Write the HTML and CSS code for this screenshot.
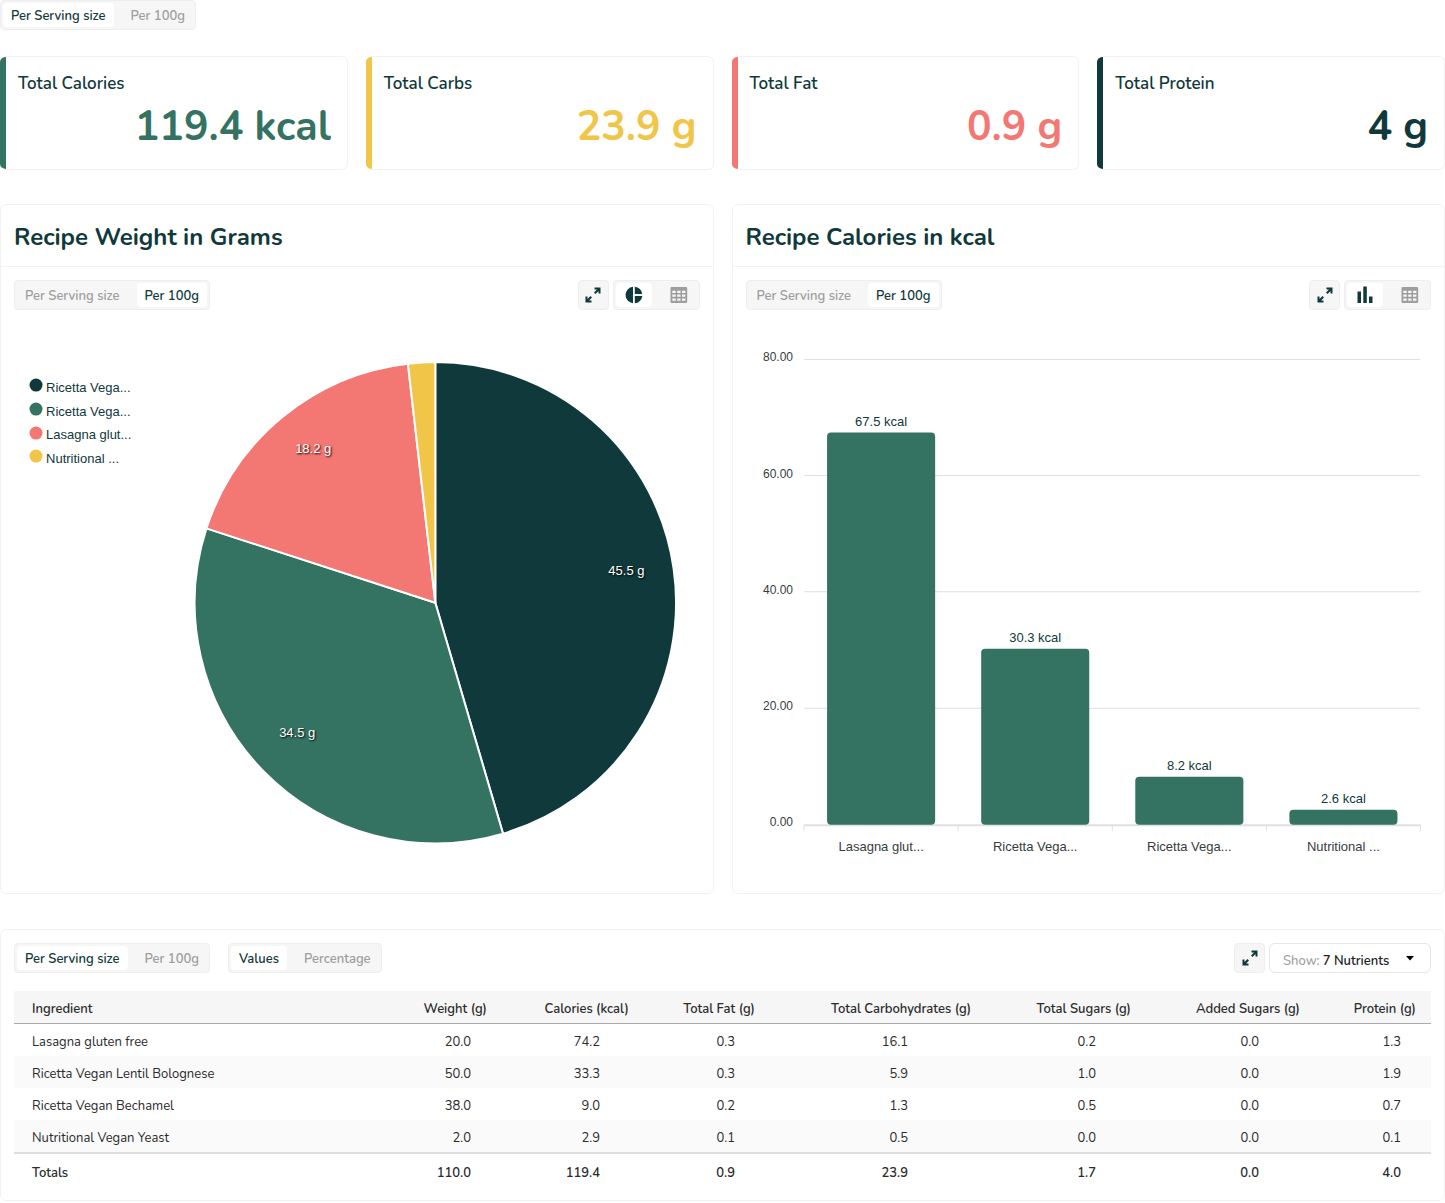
FILE: index.html
```html
<!DOCTYPE html>
<html lang="en">
<head>
<meta charset="utf-8">
<meta name="viewport" content="width=device-width, initial-scale=1">
<title>Recipe Nutrition</title>
<link rel="stylesheet" href="styles.css">
</head>
<body>
<svg class="sprite" aria-hidden="true">
  <symbol id="icon-expand" viewBox="0 0 18 18">
    <path d="M10.500 1.500H16.500V7.500H14.500V5L11.500 8L10 6.500L13 3.500H10.500ZM7.500 16.500H1.500V10.500H3.500V13L6.500 10L8 11.500L5 14.500H7.500Z"/>
  </symbol>
  <symbol id="icon-pie" viewBox="0 0 18 18">
    <path d="M8 .7V17.300A8.350 8.350 0 0 1 8 .7ZM9.800 .7A8.350 8.350 0 0 1 17.300 8.100H9.800ZM9.800 9.900H17.300A8.350 8.350 0 0 1 9.800 17.300Z"/>
  </symbol>
  <symbol id="icon-bars" viewBox="0 0 18 18">
    <path d="M1.500 5.500H5V17H1.500ZM7.300 .5H10.800V17H7.300ZM13 10.500H16.500V17H13Z"/>
  </symbol>
  <symbol id="icon-table" viewBox="0 0 18 18">
    <path fill-rule="evenodd" d="M1.500 1H16Q17.200 1 17.200 2.200V15.800Q17.200 17 16 17H1.500Q.5 17 .5 15.800V2.200Q.5 1 1.500 1ZM2.300 4.800V7H5.700V4.800ZM7.200 4.800V7H10.500V4.800ZM12 4.800V7H15.400V4.800ZM2.300 8.600V10.800H5.700V8.600ZM7.200 8.600V10.800H10.500V8.600ZM12 8.600V10.800H15.400V8.600ZM2.300 12.400V14.800H5.700V12.400ZM7.200 12.400V14.800H10.500V12.400ZM12 12.400V14.800H15.400V12.400Z"/>
  </symbol>
</svg>

<main class="page">
  <div class="toggle page-toggle" role="group" aria-label="Amount basis">
    <button type="button" class="toggle-button is-active" aria-pressed="true">Per Serving size</button>
    <button type="button" class="toggle-button" aria-pressed="false">Per 100g</button>
  </div>

  <section class="cards" aria-label="Totals">
    <article class="card card-calories"><h2 class="card-title">Total Calories</h2><p class="card-value">119.4 kcal</p></article>
    <article class="card card-carbs"><h2 class="card-title">Total Carbs</h2><p class="card-value">23.9 g</p></article>
    <article class="card card-fat"><h2 class="card-title">Total Fat</h2><p class="card-value">0.9 g</p></article>
    <article class="card card-protein"><h2 class="card-title">Total Protein</h2><p class="card-value">4 g</p></article>
  </section>

  <div class="charts">
    <section class="panel">
      <h2 class="panel-title">Recipe Weight in Grams</h2>
      <div class="toolbar">
        <div class="toggle" role="group" aria-label="Weight basis">
          <button type="button" class="toggle-button" aria-pressed="false">Per Serving size</button>
          <button type="button" class="toggle-button is-active" aria-pressed="true">Per 100g</button>
        </div>
        <div class="tools">
          <button type="button" class="icon-button" aria-label="Expand"><svg class="icon"><use href="#icon-expand"/></svg></button>
          <div class="toggle" role="group" aria-label="Weight view">
            <button type="button" class="toggle-button toggle-icon is-active" aria-label="Pie chart" aria-pressed="true"><svg class="icon"><use href="#icon-pie"/></svg></button>
            <button type="button" class="toggle-button toggle-icon" aria-label="Table" aria-pressed="false"><svg class="icon"><use href="#icon-table"/></svg></button>
          </div>
        </div>
      </div>
      <svg class="chart" viewBox="0 0 711 583" role="img" aria-label="Weight by ingredient">
        <g class="slices">
          <path class="fill-dark" d="M434 292.500V52A240.500 240.500 0 0 1 501.700 523.300Z"/>
          <path class="fill-green" d="M434 292.500L501.700 523.300A240.500 240.500 0 0 1 205.300 218.200Z"/>
          <path class="fill-coral" d="M434 292.500L205.300 218.200A240.500 240.500 0 0 1 406.600 53.600Z"/>
          <path class="fill-yellow" d="M434 292.500L406.600 53.600A240.500 240.500 0 0 1 434 52Z"/>
        </g>
        <g class="slice-labels">
          <text x="625" y="265">45.5 g</text>
          <text x="296" y="427">34.5 g</text>
          <text x="312" y="143">18.2 g</text>
        </g>
        <g class="legend">
          <circle class="fill-dark" cx="35" cy="75" r="6.500"/><text x="45" y="82">Ricetta Vega...</text>
          <circle class="fill-green" cx="35" cy="99" r="6.500"/><text x="45" y="106">Ricetta Vega...</text>
          <circle class="fill-coral" cx="35" cy="123" r="6.500"/><text x="45" y="129">Lasagna glut...</text>
          <circle class="fill-yellow" cx="35" cy="146" r="6.500"/><text x="45" y="153">Nutritional ...</text>
        </g>
      </svg>
    </section>

    <section class="panel">
      <h2 class="panel-title">Recipe Calories in kcal</h2>
      <div class="toolbar">
        <div class="toggle" role="group" aria-label="Calories basis">
          <button type="button" class="toggle-button" aria-pressed="false">Per Serving size</button>
          <button type="button" class="toggle-button is-active" aria-pressed="true">Per 100g</button>
        </div>
        <div class="tools">
          <button type="button" class="icon-button" aria-label="Expand"><svg class="icon"><use href="#icon-expand"/></svg></button>
          <div class="toggle" role="group" aria-label="Calories view">
            <button type="button" class="toggle-button toggle-icon is-active" aria-label="Bar chart" aria-pressed="true"><svg class="icon"><use href="#icon-bars"/></svg></button>
            <button type="button" class="toggle-button toggle-icon" aria-label="Table" aria-pressed="false"><svg class="icon"><use href="#icon-table"/></svg></button>
          </div>
        </div>
      </div>
      <svg class="chart" viewBox="0 0 711 583" role="img" aria-label="Calories by ingredient">
        <path class="grid" d="M71 49.500H687M71 165.500H687M71 281.500H687M71 398H687"/>
        <path class="axis" d="M71 515H687"/>
        <path class="grid" d="M71 515V521M225 515V521M379 515V521M533 515V521M687 515V521"/>
        <g class="fill-green">
          <rect x="94" y="122.500" width="108" height="392" rx="4"/>
          <rect x="248" y="338.500" width="108" height="176" rx="4"/>
          <rect x="402" y="466.500" width="108" height="48" rx="4"/>
          <rect x="556" y="499.500" width="108" height="15" rx="4"/>
        </g>
        <g class="y-labels">
          <text x="60" y="51">80.00</text>
          <text x="60" y="168">60.00</text>
          <text x="60" y="284">40.00</text>
          <text x="60" y="400">20.00</text>
          <text x="60" y="516">0.00</text>
        </g>
        <g class="bar-labels">
          <text x="148" y="116">67.5 kcal</text>
          <text x="302" y="332">30.3 kcal</text>
          <text x="456" y="460">8.2 kcal</text>
          <text x="610" y="493">2.6 kcal</text>
        </g>
        <g class="x-labels">
          <text x="148" y="541">Lasagna glut...</text>
          <text x="302" y="541">Ricetta Vega...</text>
          <text x="456" y="541">Ricetta Vega...</text>
          <text x="610" y="541">Nutritional ...</text>
        </g>
      </svg>
    </section>
  </div>

  <section class="panel" aria-label="Ingredients">
    <div class="toolbar">
      <div class="filters">
        <div class="toggle" role="group" aria-label="Table basis">
          <button type="button" class="toggle-button is-active" aria-pressed="true">Per Serving size</button>
          <button type="button" class="toggle-button" aria-pressed="false">Per 100g</button>
        </div>
        <div class="toggle" role="group" aria-label="Table units">
          <button type="button" class="toggle-button is-active" aria-pressed="true">Values</button>
          <button type="button" class="toggle-button" aria-pressed="false">Percentage</button>
        </div>
      </div>
      <div class="tools">
        <button type="button" class="icon-button" aria-label="Expand"><svg class="icon"><use href="#icon-expand"/></svg></button>
        <div class="picker">
          <label for="nutrients">Show:</label>
          <select id="nutrients"><option>7 Nutrients</option></select>
          <svg class="caret" viewBox="0 0 8 5" aria-hidden="true"><path d="M0 0H8L4 4.500Z"/></svg>
        </div>
      </div>
    </div>
    <div class="table-wrap">
      <table class="nutrients">
        <colgroup><col><col class="col-weight"><col class="col-calories"><col class="col-fat"><col class="col-carbs"><col class="col-sugars"><col class="col-added"><col class="col-protein"></colgroup>
        <thead>
          <tr><th scope="col">Ingredient</th><th scope="col">Weight (g)</th><th scope="col">Calories (kcal)</th><th scope="col">Total Fat (g)</th><th scope="col">Total Carbohydrates (g)</th><th scope="col">Total Sugars (g)</th><th scope="col">Added Sugars (g)</th><th scope="col">Protein (g)</th></tr>
        </thead>
        <tbody>
          <tr><td>Lasagna gluten free</td><td>20.0</td><td>74.2</td><td>0.3</td><td>16.1</td><td>0.2</td><td>0.0</td><td>1.3</td></tr>
          <tr><td>Ricetta Vegan Lentil Bolognese</td><td>50.0</td><td>33.3</td><td>0.3</td><td>5.9</td><td>1.0</td><td>0.0</td><td>1.9</td></tr>
          <tr><td>Ricetta Vegan Bechamel</td><td>38.0</td><td>9.0</td><td>0.2</td><td>1.3</td><td>0.5</td><td>0.0</td><td>0.7</td></tr>
          <tr><td>Nutritional Vegan Yeast</td><td>2.0</td><td>2.9</td><td>0.1</td><td>0.5</td><td>0.0</td><td>0.0</td><td>0.1</td></tr>
        </tbody>
        <tfoot>
          <tr><td>Totals</td><td>110.0</td><td>119.4</td><td>0.9</td><td>23.9</td><td>1.7</td><td>0.0</td><td>4.0</td></tr>
        </tfoot>
      </table>
    </div>
  </section>
</main>
</body>
</html>
```
FILE: styles.css
```css
:root {
  --dark: #10393b;
  --green: #347362;
  --coral: #f37772;
  --yellow: #f1c548;
  --muted: #9e9e9e;
  --line: #f2f2f2;
  --surface: #f6f6f6;
}

* { box-sizing: border-box; }

body {
  margin: 0;
  background: #fff;
  color: var(--dark);
  font: 13px/20px Nunito, "Open Sans", sans-serif;
}

h2, p { margin: 0; }
button, select { font: inherit; color: inherit; }
.sprite { display: none; }

.toggle {
  display: inline-flex;
  gap: 9px;
  height: 30px;
  padding: 2px;
  border: 1px solid #eee;
  border-radius: 4px;
  background: var(--surface);
}
.page-toggle {
  display: flex;
  width: fit-content;
  margin-bottom: 26px;
}

.toggle-button {
  padding: 2px 8px 0;
  border: 0;
  border-radius: 4px;
  background: none;
  color: var(--muted);
  font-weight: 600;
  line-height: 22px;
  cursor: pointer;
}
.toggle-button.is-active { background: #fff; color: var(--dark); }

.toggle-icon, .icon-button {
  display: flex;
  align-items: center;
  justify-content: center;
}
.toggle-icon { padding: 0 9px; }
.icon { width: 18px; height: 18px; fill: currentColor; }

.icon-button {
  width: 31px;
  height: 30px;
  padding: 0;
  border: 1px solid #eee;
  border-radius: 4px;
  background: var(--surface);
  cursor: pointer;
}

.cards {
  display: grid;
  grid-template-columns: repeat(4, 1fr);
  gap: 18px;
  margin-bottom: 34px;
}
.card {
  border: 1px solid var(--line);
  border-left: 0;
  border-radius: 6px;
  overflow: hidden;
  display: grid;
  grid-template-columns: 6px 1fr;
}
.card::before { content: ""; grid-row: 1 / 3; background: currentColor; }
.card-title {
  padding: 14px 12px 0;
  color: var(--dark);
  font-size: 17px;
  font-weight: 600;
  line-height: 26px;
}
.card-value {
  padding: 2px 16px 14px;
  font-size: 41px;
  font-weight: 700;
  line-height: 56px;
  text-align: right;
}
.card-calories { color: var(--green); }
.card-carbs { color: var(--yellow); }
.card-fat { color: var(--coral); }
.card-protein { color: var(--dark); }

.charts {
  display: grid;
  grid-template-columns: repeat(2, 1fr);
  gap: 18px;
  margin-bottom: 35px;
}
.panel { min-width: 0; border: 1px solid var(--line); border-radius: 6px; }
.panel-title {
  padding: 16px 13px 12px;
  border-bottom: 1px solid var(--line);
  font-size: 24px;
  font-weight: 700;
  line-height: 33px;
}
.toolbar {
  display: flex;
  justify-content: space-between;
  padding: 13px 13px 0;
}
.tools { display: flex; gap: 4px; }
.filters { display: flex; gap: 18px; }

.chart {
  display: block;
  width: 100%;
  font: 13px "Liberation Sans", Arial, sans-serif;
  fill: var(--dark);
}
.fill-dark { fill: var(--dark); }
.fill-green { fill: var(--green); }
.fill-coral { fill: var(--coral); }
.fill-yellow { fill: var(--yellow); }
.slices { stroke: #fff; stroke-width: 2px; stroke-linejoin: round; }
.slice-labels { fill: #fff; text-anchor: middle; text-shadow: 1px 1px 2px #000; }
.grid, .axis { fill: none; stroke: #e0e0e0; }
.axis { stroke-width: 2px; }
.y-labels { fill: #373d3f; font-size: 12px; text-anchor: end; }
.bar-labels { text-anchor: middle; }
.x-labels { fill: #373d3f; text-anchor: middle; }

.picker {
  display: flex;
  align-items: center;
  width: 162px;
  height: 30px;
  padding: 5px 16px 0 13px;
  border: 1px solid #e6e6e6;
  border-radius: 6px;
  color: #222;
  font-weight: 600;
}
.picker label { color: var(--muted); font-weight: 500; }
.picker select {
  flex: 1;
  min-width: 0;
  padding: 0 0 0 3px;
  border: 0;
  background: none;
  appearance: none;
}
.caret { width: 8px; height: 5px; margin-bottom: 4px; }

.table-wrap { padding: 18px 13px 13px; }
.nutrients {
  width: 100%;
  table-layout: fixed;
  border-collapse: collapse;
  color: #2b2b2b;
  white-space: nowrap;
}
.col-weight { width: 92px; }
.col-calories { width: 142px; }
.col-fat { width: 126px; }
.col-carbs { width: 216px; }
.col-sugars { width: 160px; }
.col-added { width: 169px; }
.col-protein { width: 116px; }

.nutrients th, .nutrients td { padding: 8px 15px 4px 0; text-align: right; }
.nutrients th { background: var(--surface); font-weight: 600; }
.nutrients thead { border-bottom: 1px solid #aaa; }
.nutrients tbody tr:nth-child(even) { background: #fafafa; }
.nutrients th:first-child, .nutrients td:first-child { padding-left: 18px; text-align: left; }
.nutrients td:nth-child(2) { padding-right: 31px; }
.nutrients td:nth-child(3) { padding-right: 44px; }
.nutrients td:nth-child(4) { padding-right: 35px; }
.nutrients td:nth-child(5) { padding-right: 78px; }
.nutrients td:nth-child(6) { padding-right: 50px; }
.nutrients td:nth-child(7) { padding-right: 56px; }
.nutrients td:nth-child(8) { padding-right: 30px; }
.nutrients tfoot { border-top: 2px solid #ddd; font-weight: 600; }
.nutrients tfoot td { padding-top: 9px; }
```
